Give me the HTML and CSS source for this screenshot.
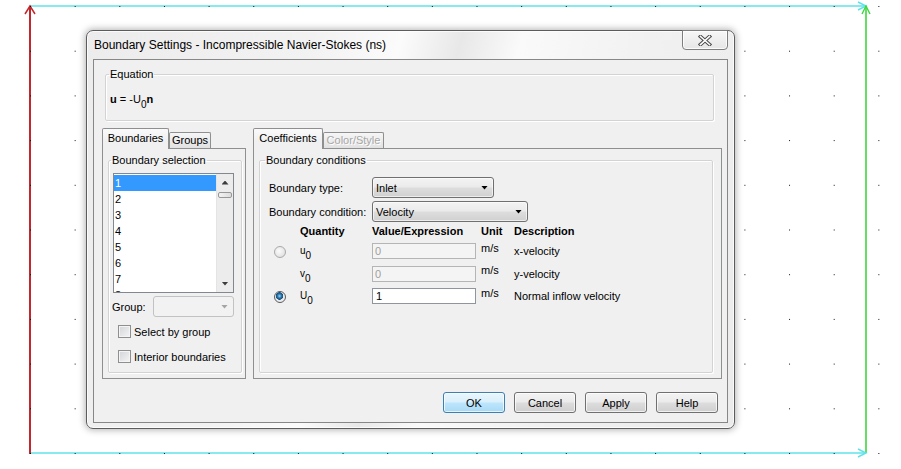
FILE: index.html
```html
<!DOCTYPE html>
<html lang="en">
<head>
<meta charset="utf-8">
<title>Boundary Settings</title>
<link rel="stylesheet" href="styles.css">
</head>
<body>
<div class="desk">
  <svg class="canvas" width="901" height="469" viewBox="0 0 901 469">
    <defs>
      <pattern id="dots" x="30" y="6" width="44.65" height="44.7" patternUnits="userSpaceOnUse">
        <rect x="0" y="0" width="1" height="1" fill="#111" shape-rendering="crispEdges"/>
      </pattern>
    </defs>
    <line x1="30" y1="453" x2="866" y2="453" stroke="#5fe3e8" stroke-width="1.6"/>
    <line x1="30" y1="6" x2="866" y2="6" stroke="#5fe3e8" stroke-width="1.6"/>
    <line x1="866" y1="453" x2="866" y2="6" stroke="#3fd63f" stroke-width="1.6"/>
    <line x1="30" y1="454" x2="30" y2="6" stroke="#c1272d" stroke-width="2"/>
    <polyline points="25,14 30,6 35,14" fill="none" stroke="#c1272d" stroke-width="1.5"/>
    <polyline points="858,2 866,6 858,10" fill="none" stroke="#5fe3e8" stroke-width="1.4"/>
    <polyline points="862,14 866,6 870,14" fill="none" stroke="#3fd63f" stroke-width="1.4"/>
    <polyline points="858,449 866,453 858,457" fill="none" stroke="#5fe3e8" stroke-width="1.4"/>
    <rect x="0" y="0" width="901" height="469" fill="url(#dots)"/>
  </svg>

  <div class="dialog">
    <div class="titlebar">
      <span class="title">Boundary Settings - Incompressible Navier-Stokes (ns)</span>
      <div class="close">
        <svg width="14" height="11" viewBox="0 0 14 11">
          <path d="M2.5 1.5L11.5 9.5M11.5 1.5L2.5 9.5" stroke="#4a4a4a" stroke-width="3.6" stroke-linecap="square"/>
          <path d="M2.5 1.5L11.5 9.5M11.5 1.5L2.5 9.5" stroke="#ffffff" stroke-width="1.6" stroke-linecap="square"/>
        </svg>
      </div>
    </div>

    <div class="client">
      <fieldset class="group eq">
        <legend>Equation</legend>
        <div class="eq-text"><b>u</b> = -U<sub>0</sub><b>n</b></div>
      </fieldset>

      <div class="tabcols">
        <div class="tabcol left">
          <div class="tabstrip">
            <div class="tab active w-bound">Boundaries</div>
            <div class="tab w-groups">Groups</div>
          </div>
          <div class="panel">
            <fieldset class="group sel">
              <legend>Boundary selection</legend>
              <div class="listbox">
                <div class="items">
                  <div class="item on">1</div>
                  <div class="item">2</div>
                  <div class="item">3</div>
                  <div class="item">4</div>
                  <div class="item">5</div>
                  <div class="item">6</div>
                  <div class="item">7</div>
                  <div class="item">8</div>
                </div>
                <div class="vscroll">
                  <div class="sbtn"><span class="tri up"></span></div>
                  <div class="thumb"></div>
                  <div class="sfill"></div>
                  <div class="sbtn"><span class="tri down"></span></div>
                </div>
              </div>
              <div class="grouprow">
                <span class="glabel">Group:</span>
                <div class="combo disabled gcombo"><span class="caret"></span></div>
              </div>
              <label class="check"><span class="box"></span>Select by group</label>
              <label class="check"><span class="box"></span>Interior boundaries</label>
            </fieldset>
          </div>
        </div>

        <div class="tabcol right">
          <div class="tabstrip">
            <div class="tab active w-coef">Coefficients</div>
            <div class="tab off w-color">Color/Style</div>
          </div>
          <div class="panel">
            <fieldset class="group bc">
              <legend>Boundary conditions</legend>
              <div class="frow first">
                <span class="flabel">Boundary type:</span>
                <div class="combo w-type"><span class="ctext">Inlet</span><span class="caret"></span></div>
              </div>
              <div class="frow">
                <span class="flabel">Boundary condition:</span>
                <div class="combo w-cond"><span class="ctext">Velocity</span><span class="caret"></span></div>
              </div>
              <div class="qgrid">
                <span></span>
                <span class="hd">Quantity</span>
                <span class="hd">Value/Expression</span>
                <span class="hd">Unit</span>
                <span class="hd">Description</span>

                <span class="radio"></span>
                <span class="sym">u<sub>0</sub></span>
                <span class="field dis">0</span>
                <span class="unit">m/s</span>
                <span class="desc">x-velocity</span>

                <span></span>
                <span class="sym">v<sub>0</sub></span>
                <span class="field dis">0</span>
                <span class="unit">m/s</span>
                <span class="desc">y-velocity</span>

                <span class="radio on"></span>
                <span class="sym">U<sub>0</sub></span>
                <span class="field">1</span>
                <span class="unit">m/s</span>
                <span class="desc">Normal inflow velocity</span>
              </div>
            </fieldset>
          </div>
        </div>
      </div>

      <div class="buttons">
        <button class="btn default">OK</button>
        <button class="btn">Cancel</button>
        <button class="btn">Apply</button>
        <button class="btn">Help</button>
      </div>
    </div>
  </div>
</div>
</body>
</html>
```

FILE: styles.css
```css
* { box-sizing: border-box; }
html, body { margin: 0; padding: 0; background: #fff; }
body {
  font-family: "Liberation Sans", Arial, sans-serif;
  font-size: 11px;
  color: #000;
}
.desk { position: relative; width: 901px; height: 469px; overflow: hidden; }
.canvas { position: absolute; left: 0; top: 0; }

/* window */
.dialog {
  position: absolute;
  left: 86px; top: 30px;
  width: 649px; height: 399px;
  border: 1px solid #5c5c5c;
  border-radius: 7px;
  background: linear-gradient(105deg, #ececec 0%, #f2f2f2 30%, #fbfbfb 42%, #e8e8e8 50%, #fafafa 58%, #f1f1f1 75%, #ebebeb 100%);
  box-shadow: inset 0 0 0 1px rgba(255,255,255,.75), 0 0 7px 1px rgba(0,0,0,.3);
  padding: 0 6px 5px 6px;
  display: flex;
  flex-direction: column;
}
.titlebar { height: 28px; display: flex; align-items: center; }
.title { flex: 1; font-size: 12px; padding-left: 1px; }
.close {
  align-self: flex-start;
  margin-top: -1px;
  width: 46px; height: 20px;
  border: 1px solid #7e7e7e;
  border-radius: 0 0 4px 4px;
  background: linear-gradient(#f7f7f7, #e6e6e6);
  box-shadow: inset 0 0 0 1px rgba(255,255,255,.8);
  display: flex; align-items: center; justify-content: center;
  padding-top: 1px;
}

.client {
  height: 364px;
  border: 1px solid #878787;
  background: #f0f0f0;
  display: flex;
  flex-direction: column;
}

/* group boxes */
.group {
  margin: 0;
  min-width: 0;
  border: 1px solid #d3d3d3;
  border-radius: 2px;
  box-shadow: inset 1px 1px 0 #fff, 1px 1px 0 #fff;
  padding: 0 3px;
}
.group legend { padding: 0 1px; line-height: 13px; }
.eq { margin: 8px 13px 0 11px; }
.eq-text { padding: 12px 0 14px 1px; line-height: 13px; }
.eq-text sub { font-size: 10px; vertical-align: -5px; line-height: 0; }

/* tabs */
.tabcols { display: flex; gap: 7px; margin: 7px 0 0 8px; }
.tabcol.left { width: 144px; }
.tabcol.right { width: 469px; }
.tabstrip { height: 20px; display: flex; align-items: flex-end; }
.tab {
  height: 16px;
  border: 1px solid #8e8f8f;
  border-bottom: none;
  border-radius: 2px 2px 0 0;
  background: linear-gradient(#f6f6f6, #e1e1e1);
  display: flex; align-items: center; justify-content: center;
  line-height: 13px;
}
.tab.active {
  height: 21px;
  margin-bottom: -1px;
  position: relative;
  z-index: 1;
  background: linear-gradient(#fafafa, #f0f0f0 60%);
  padding-bottom: 1px;
}
.tab.off { color: #a7a7a7; text-shadow: 1px 1px 0 #fff; }
.w-bound { width: 67px; }
.w-groups { width: 42px; }
.w-coef { width: 70px; }
.w-color { width: 61px; }

.panel {
  height: 231px;
  border: 1px solid #8e8f8f;
  background: #f0f0f0;
  display: flex;
  flex-direction: column;
  padding: 5px 3px 5px 5px;
}
.tabcol.right .panel { padding: 5px 8px 5px 5px; }
.panel .group { flex: 1; }
.sel { padding: 0 7px 0 2px; }
.bc { padding: 0 5px; }

/* listbox */
.listbox {
  margin: 6px 0 0 2px;
  width: 121px; height: 120px;
  border: 1px solid #828790;
  background: #fff;
  display: flex;
}
.items { width: 102px; padding-top: 1px; overflow: hidden; }
.item { height: 16px; line-height: 16px; padding-left: 1px; }
.item.on { background: #3399ff; color: #fff; }
.vscroll {
  width: 17px;
  background: #ececec;
  border-left: 1px solid #e4e4e4;
  display: flex; flex-direction: column;
}
.sbtn { height: 17px; display: flex; align-items: center; justify-content: center; }
.tri { width: 7px; height: 4px; background: #3c3c3c; }
.tri.up { clip-path: polygon(50% 0, 100% 100%, 0 100%); }
.tri.down { clip-path: polygon(0 0, 100% 0, 50% 100%); }
.thumb {
  margin: 1px 1px 0 1px;
  height: 6px;
  border: 1px solid #979797;
  border-radius: 2px;
  background: linear-gradient(90deg, #f3f3f3, #dcdcdc);
}
.sfill { flex: 1; }

.grouprow { display: flex; align-items: center; height: 21px; margin-top: 3px; }
.glabel { width: 42px; padding-left: 1px; }

/* combos */
.combo {
  height: 21px;
  border: 1px solid #707070;
  border-radius: 3px;
  background: linear-gradient(#f3f3f3 0%, #ebebeb 48%, #dddddd 52%, #d0d0d0 100%);
  box-shadow: inset 0 0 0 1px rgba(255,255,255,.6);
  display: flex; align-items: center;
  padding: 0 5px 0 3px;
}
.ctext { flex: 1; }
.caret { width: 7px; height: 4px; background: #000; clip-path: polygon(0 0, 100% 0, 50% 100%); margin-left: auto; }
.combo.disabled {
  border-color: #c2c2c2;
  background: #f2f2f2;
  box-shadow: none;
}
.combo.disabled .caret { background: #a5a5a5; }
.gcombo { width: 81px; }
.w-type { width: 122px; }
.w-cond { width: 156px; }

.check { display: flex; align-items: center; gap: 3px; height: 25px; padding-left: 7px; }
.sel .check:nth-of-type(1) { margin-top: 2px; }
.box {
  width: 13px; height: 13px;
  border: 1px solid #8e8f8f;
  background: linear-gradient(135deg, #d2d4d8, #f5f5f5);
  box-shadow: inset 0 0 0 1px #f4f4f4;
}

/* form rows */
.frow { display: flex; align-items: center; height: 21px; margin: 3px 0 0 4px; }
.frow.first { margin-top: 10px; }
.flabel { width: 103px; }

.qgrid {
  margin-left: 4px;
  display: grid;
  grid-template-columns: 31px 72px 109px 33px auto;
  grid-template-rows: 18px 22px 23px 22px;
  align-items: center;
}
.hd { font-weight: bold; }
.radio {
  margin-left: 5px;
  margin-top: 2px;
  width: 12px; height: 12px;
  border: 1px solid #a9a9a9;
  border-radius: 50%;
  background: radial-gradient(circle at 40% 40%, #fbfbfb, #d9d9d9);
}
.radio.on {
  border-color: #5b5b5b;
  background: radial-gradient(circle at 45% 40%, #9fd6f5 0, #2b77ae 2px, #154e7c 3.5px, #e9e9e9 4px, #f6f6f6 100%);
}
.sym { font-size: 10px; line-height: 13px; margin-top: -1px; }
.sym sub { font-size: 10px; vertical-align: -5px; line-height: 0; }
.field {
  width: 104px; height: 16px;
  border: 1px solid #8f959c;
  background: #fff;
  padding-left: 3px;
  line-height: 14px;
}
.field.dis { border-color: #b5b5b5; background: #f4f4f4; color: #a0a0a0; padding-left: 2px; }
.unit { align-self: start; margin-top: 2px; line-height: 13px; }

/* buttons */
.buttons { display: flex; justify-content: flex-end; gap: 9px; margin: 13px 9px 0 0; }
.btn {
  width: 62px; height: 21px;
  font: inherit;
  color: #000;
  border: 1px solid #707070;
  border-radius: 3px;
  background: linear-gradient(#f3f3f3 0%, #ebebeb 48%, #dddddd 52%, #cfcfcf 100%);
  box-shadow: inset 0 0 0 1px rgba(255,255,255,.7);
  padding: 0;
}
.btn.default {
  border-color: #3c7fb1;
  background: linear-gradient(#eaf6fd 0%, #d9f0fc 48%, #bee6fd 52%, #a7d9f5 100%);
}
```
